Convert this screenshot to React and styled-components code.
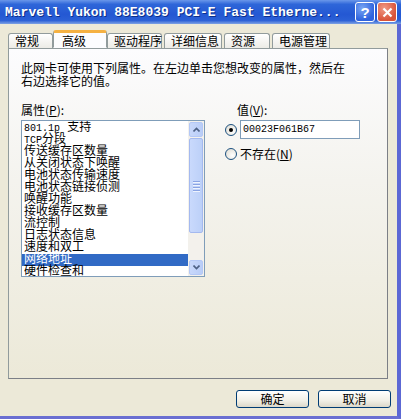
import React from 'react';
import styled, { createGlobalStyle } from 'styled-components';

const GlobalStyle = createGlobalStyle`
    html, body {
        margin:0;
        padding:0;
        background:#ECE9D8;
    }
    * { box-sizing:border-box; }
`

const CJK = `"Noto Sans CJK SC", "Noto Sans", sans-serif`;
const MONO = `"Liberation Mono", "Noto Sans CJK SC", monospace`;

const Window = styled.div`
    display:flex;
    flex-direction:column;
    width:401px;
    height:419px;
    background:#ECE9D8;
    font-family:${CJK};
    font-size:12px;
    color:#000;
    overflow:hidden;
`

const TitleBar = styled.div`
    display:flex;
    align-items:center;
    height:24px;
    padding:0 4px 0 5px;
    background:linear-gradient(#6a97ea 0%, #2e66d9 18%, #2458d3 60%, #2b60d6 85%, #7fa2e4 100%);
`

const Title = styled.div`
    flex:1;
    font-family:"Liberation Mono", monospace;
    font-weight:bold;
    font-size:13px;
    color:#fff;
    white-space:nowrap;
    text-shadow:1px 1px 0 #0d2f8a;
`

const CaptionBtn = styled.div`
    display:flex;
    align-items:center;
    justify-content:center;
    width:20px;
    height:20px;
    margin-left:2px;
    border:1px solid #fff;
    border-radius:3px;
    background:${props => props.close
        ? 'radial-gradient(circle at 35% 30%, #f09a85, #d9543a 70%)'
        : 'radial-gradient(circle at 35% 30%, #7aa6f3, #2e63de 70%)'};
    color:#fff;
    font-family:"Liberation Sans", sans-serif;
    font-weight:bold;
    font-size:15px;
`

const Frame = styled.div`
    flex:1;
    display:flex;
    flex-direction:column;
    padding:7px 6px 8px 8px;
    border-right:4px solid #5c68d4;
    border-bottom:3px solid #6a6fd2;
`

const TabStrip = styled.div`
    display:flex;
    align-items:flex-end;
    height:17px;
    gap:2px;
    position:relative;
    z-index:1;
`

const Tab = styled.div`
    width:${props => props.w}px;
    height:${props => props.active ? 18 : 15}px;
    margin:${props => props.active ? '0 -2px 0 -2px' : '0'};
    padding:${props => props.active ? '0 0 0 8px' : '0 0 0 6px'};
    line-height:${props => props.active ? 15 : 14}px;
    border:1px solid #919b9c;
    border-bottom:${props => props.active ? '1px solid #fcfcfe' : 'none'};
    border-top:${props => props.active ? '3px solid #f5b142' : '1px solid #919b9c'};
    border-radius:3px 3px 0 0;
    background:${props => props.active ? '#fcfcfe' : 'linear-gradient(#fff, #ecebe6)'};
    white-space:nowrap;
`

const Panel = styled.div`
    display:flex;
    flex-direction:column;
    height:331px;
    margin-right:3px;
    padding:12px 12px 0 12px;
    border:1px solid #919b9c;
    border-right-color:#7c7f86;
    border-bottom-color:#7c7f86;
    background:linear-gradient(#fcfcfe, #f4f3ee 40%, #ece9d8);
`

const Description = styled.div`
    line-height:13px;
    margin-bottom:16px;
`

const Columns = styled.div`
    display:flex;
    gap:20px;
`

const Column = styled.div`
    display:flex;
    flex-direction:column;
`

const Label = styled.div`
    line-height:13px;
    margin-bottom:4px;
    padding-left:${props => props.indent || 0}px;
`

const ListBox = styled.div`
    display:flex;
    width:184px;
    height:157px;
    border:1px solid #7f9db9;
    background:#fff;
`

const Items = styled.div`
    flex:1;
    padding-top:1px;
    overflow:hidden;
`

const Item = styled.div`
    height:12px;
    line-height:12px;
    padding-left:2px;
    font-size:12px;
    white-space:nowrap;
    font-family:${MONO};
    background:${props => props.selected ? '#316ac5' : 'transparent'};
    color:${props => props.selected ? '#fff' : '#000'};
`

const Latin = styled.span`
    font-size:10px;
`

const ScrollBar = styled.div`
    display:flex;
    flex-direction:column;
    width:16px;
    padding:1px 0;
    background:#f3f1ec;
`

const ArrowBtn = styled.div`
    display:flex;
    align-items:center;
    justify-content:center;
    height:15px;
    margin:0 1px;
    border:1px solid #b4c8f6;
    border-radius:2px;
    background:linear-gradient(90deg, #c8d8fb, #b9cdf7);
`

const Thumb = styled.div`
    display:flex;
    flex-direction:column;
    align-items:center;
    justify-content:center;
    gap:2px;
    height:95px;
    margin:1px 1px 0 1px;
    border:1px solid #a4b9ef;
    border-radius:2px;
    background:linear-gradient(90deg, #c9d9fc, #bcd0f8);
`

const Grip = styled.div`
    width:7px;
    height:1px;
    background:#8aa4e4;
    box-shadow:0 1px 0 #eef3fe;
`

const Track = styled.div`
    flex:1;
`

const Row = styled.div`
    display:flex;
    align-items:center;
    gap:3px;
    margin-bottom:${props => props.gap || 0}px;
`

const Radio = styled.div`
    display:flex;
    align-items:center;
    justify-content:center;
    width:12px;
    height:12px;
    border:1px solid #1c5180;
    border-radius:50%;
    background:radial-gradient(circle at 65% 65%, #fff, #dcd9ce);
`

const Dot = styled.div`
    width:4px;
    height:4px;
    border-radius:50%;
    background:#000;
`

const ValueInput = styled.div`
    width:120px;
    height:19px;
    padding:2px 0 0 2px;
    border:1px solid #7f9db9;
    background:#fff;
    font-family:"Liberation Mono", monospace;
    font-size:10px;
    line-height:14px;
`

const Footer = styled.div`
    display:flex;
    justify-content:flex-end;
    gap:9px;
    margin-top:auto;
`

const Button = styled.div`
    width:73px;
    height:18px;
    line-height:16px;
    text-align:center;
    border:1px solid #003c74;
    border-radius:3px;
    background:linear-gradient(#fff, #f1efe6 60%, #dcd8c9);
`

const properties = [
    ['801.1p', ' 支持'],
    ['TCP', '分段'],
    ['', '传送缓存区数量'],
    ['', '从关闭状态下唤醒'],
    ['', '电池状态传输速度'],
    ['', '电池状态链接侦测'],
    ['', '唤醒功能'],
    ['', '接收缓存区数量'],
    ['', '流控制'],
    ['', '日志状态信息'],
    ['', '速度和双工'],
    ['', '网络地址'],
    ['', '硬件检查和'],
];

const tabs = [
    { label: '常规', w: 45 },
    { label: '高级', w: 54, active: true },
    { label: '驱动程序', w: 55 },
    { label: '详细信息', w: 58 },
    { label: '资源', w: 46 },
    { label: '电源管理', w: 58 },
];

function Arrow({ up }) {
    return (
        <svg width="7" height="5" viewBox="0 0 7 5">
            <path d={up ? 'M0.5 4.5 L3.5 1.5 L6.5 4.5' : 'M0.5 0.5 L3.5 3.5 L6.5 0.5'} fill="none" stroke="#4d6185" strokeWidth="1.6" />
        </svg>
    );
}

function App() {

    return (
        <Window>
            <GlobalStyle />
            <TitleBar>
                <Title>Marvell Yukon 88E8039 PCI-E Fast Etherne...</Title>
                <CaptionBtn>?</CaptionBtn>
                <CaptionBtn close>
                    <svg width="11" height="11" viewBox="0 0 11 11">
                        <path d="M1.5 1.5 L9.5 9.5 M9.5 1.5 L1.5 9.5" stroke="#fff" strokeWidth="2.2" />
                    </svg>
                </CaptionBtn>
            </TitleBar>
            <Frame>
                <TabStrip>
                    {tabs.map(t => (
                        <Tab key={t.label} w={t.w} active={t.active}>{t.label}</Tab>
                    ))}
                </TabStrip>
                <Panel>
                    <Description>
                        此网卡可使用下列属性。在左边单击您想改变的属性，然后在<br />
                        右边选择它的值。
                    </Description>
                    <Columns>
                        <Column>
                            <Label>属性(<u>P</u>):</Label>
                            <ListBox>
                                <Items>
                                    {properties.map(([latin, cjk]) => (
                                        <Item key={latin + cjk} selected={cjk === '网络地址'}>
                                            {latin && <Latin>{latin}</Latin>}{cjk}
                                        </Item>
                                    ))}
                                </Items>
                                <ScrollBar>
                                    <ArrowBtn><Arrow up /></ArrowBtn>
                                    <Thumb><Grip /><Grip /><Grip /><Grip /></Thumb>
                                    <Track />
                                    <ArrowBtn><Arrow /></ArrowBtn>
                                </ScrollBar>
                            </ListBox>
                        </Column>
                        <Column>
                            <Label indent={12}>值(<u>V</u>):</Label>
                            <Row gap={6}>
                                <Radio><Dot /></Radio>
                                <ValueInput>00023F061B67</ValueInput>
                            </Row>
                            <Row>
                                <Radio />
                                <span>不存在(<u>N</u>)</span>
                            </Row>
                        </Column>
                    </Columns>
                </Panel>
                <Footer>
                    <Button>确定</Button>
                    <Button>取消</Button>
                </Footer>
            </Frame>
        </Window>
    );
}

export default App;
